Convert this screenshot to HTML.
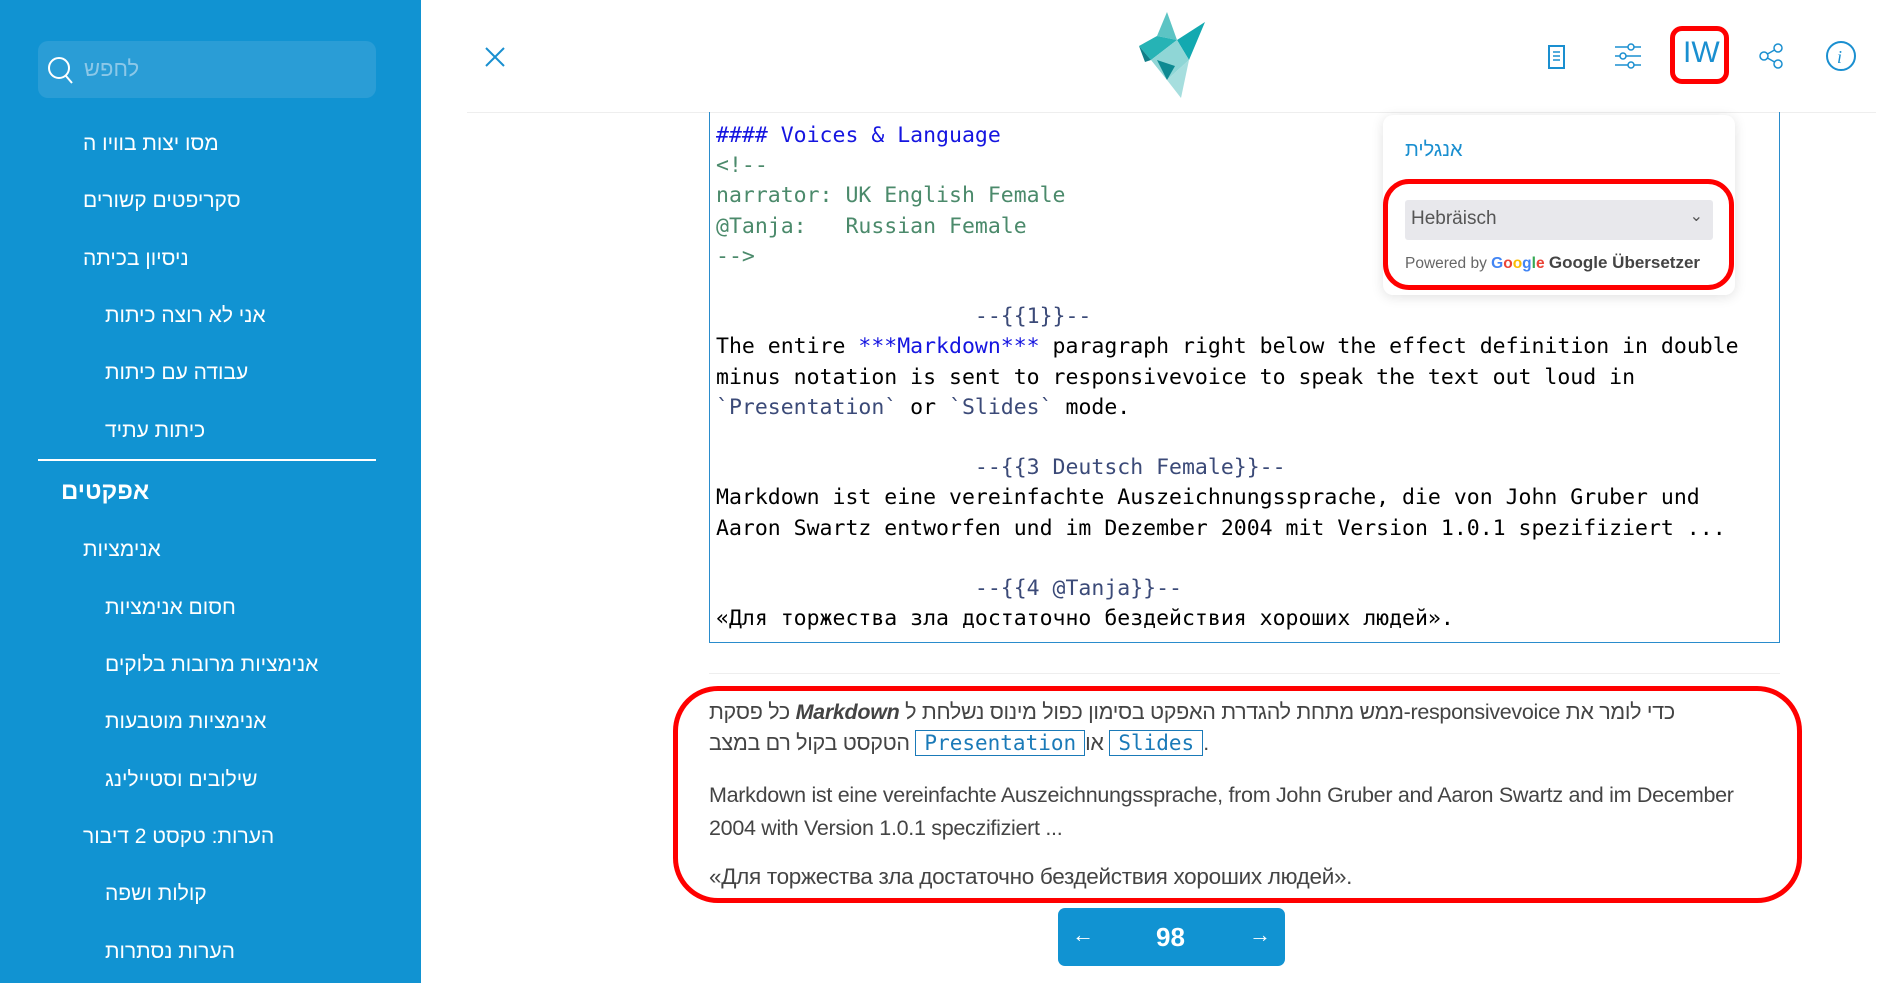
<!DOCTYPE html>
<html><head><meta charset="utf-8"><style>
*{margin:0;padding:0;box-sizing:border-box}
body{width:1903px;height:983px;position:relative;overflow:hidden;background:#fff;font-family:"Liberation Sans","Noto Sans CJK SC",sans-serif}
.sb{position:absolute;left:0;top:0;width:421px;height:983px;background:#1193d2;color:#fff}
.search{position:absolute;left:38px;top:41px;width:338px;height:57px;background:#2a9dd6;border-radius:10px}
.search span{position:absolute;left:46px;top:15px;font-size:22px;color:#8cc8e8}
.it{position:absolute;font-size:21px;white-space:nowrap;transform:translateY(-50%)}
.l1{left:83px}.l2{left:105px}
.hr{position:absolute;left:38px;width:338px;top:459px;border-top:2px solid #fff}
.abs{position:absolute}
.code{position:absolute;left:709px;top:112px;width:1071px;height:531px;border:1px solid #2a8ccc;border-top:none;overflow:hidden;font-family:"DejaVu Sans Mono","Liberation Mono",monospace;font-size:21.5px;line-height:30.2px;padding:9px 0 0 6px;white-space:pre}
.b{color:#1515e0}.g{color:#4b8a6b}.c{color:#3b4a78}
.pop{position:absolute;left:1383px;top:115px;width:352px;height:180px;background:#fff;border-radius:10px;box-shadow:0 2px 12px rgba(0,0,0,.12)}
.red{position:absolute;border:5px solid #f00}
.tx{position:absolute;left:709px;font-size:21.5px;color:#444;white-space:nowrap;font-family:"Liberation Sans",sans-serif;letter-spacing:-0.3px;direction:ltr}
.cd{font-family:"DejaVu Sans Mono","Liberation Mono",monospace;color:#1a7ab8;border:1px solid #1a7ab8;padding:0 8px;font-size:21px;letter-spacing:0}
</style></head><body>
<div class="sb">
 <div class="search"><svg class="abs" style="left:8px;top:14px" width="30" height="32" viewBox="0 0 30 32"><circle cx="13" cy="13" r="10" fill="none" stroke="#fff" stroke-width="2"/><path d="M20 21l6 7" stroke="#fff" stroke-width="2"/></svg><span>לחפש</span></div>
 <div class="it l1" style="top:144px">מסו יצות בוויו ה</div>
 <div class="it l1" style="top:201px">סקריפטים קשורים</div>
 <div class="it l1" style="top:259px">ניסיון בכיתה</div>
 <div class="it l2" style="top:316px">אני לא רוצה כיתות</div>
 <div class="it l2" style="top:373px">עבודה עם כיתות</div>
 <div class="it l2" style="top:431px">כיתות עתיד</div>
 <div class="hr"></div>
 <div class="it" style="left:61px;top:492px;font-weight:bold;font-size:24px">אפקטים</div>
 <div class="it l1" style="top:550px">אנימציות</div>
 <div class="it l2" style="top:608px">חסום אנימציות</div>
 <div class="it l2" style="top:665px">אנימציות מרובות בלוקים</div>
 <div class="it l2" style="top:722px">אנימציות מוטבעות</div>
 <div class="it l2" style="top:780px">שילובים וסטיילינג</div>
 <div class="it l1" style="top:837px">הערות: טקסט 2 דיבור</div>
 <div class="it l2" style="top:894px">קולות ושפה</div>
 <div class="it l2" style="top:952px">הערות נסתרות</div>
</div>
<svg class="abs" style="left:484px;top:46px" width="22" height="22"><path d="M2 2L20 20M20 2L2 20" stroke="#1a8fd0" stroke-width="2"/></svg>
<svg class="abs" style="left:1137px;top:10px" width="70" height="88" viewBox="0 0 70 88"><polygon points="30,2 40,30 20,26" fill="#5cc4c4"/><polygon points="40,30 68,12 52,50" fill="#13a9b0"/><polygon points="2,36 20,26 40,30 14,50" fill="#26b3b5"/><polygon points="14,50 40,30 52,50 30,70" fill="#8fd6d6"/><polygon points="2,36 14,50 8,52" fill="#107f88"/><polygon points="30,70 52,50 44,88" fill="#a6dede"/><polygon points="20,50 38,56 30,70" fill="#0e8a92"/></svg>
<div class="abs" style="left:467px;top:112px;width:1409px;border-top:1px solid #eee"></div>
<svg class="abs" style="left:1547px;top:44px" width="20" height="26"><rect x="2" y="2" width="15" height="22" fill="none" stroke="#1a8fd0" stroke-width="2"/><path d="M6 8h7M6 12h7M6 16h7" stroke="#1a8fd0" stroke-width="1.5"/></svg>
<svg class="abs" style="left:1613px;top:42px" width="30" height="28"><path d="M2 5h26M2 14h26M2 23h26" stroke="#1a8fd0" stroke-width="1.5"/><circle cx="18" cy="5" r="3" fill="#fff" stroke="#1a8fd0" stroke-width="1.5"/><circle cx="10" cy="14" r="3" fill="#fff" stroke="#1a8fd0" stroke-width="1.5"/><circle cx="18" cy="23" r="3" fill="#fff" stroke="#1a8fd0" stroke-width="1.5"/></svg>
<div class="abs" style="left:1683px;top:36px;font-size:30px;color:#1a8fd0">IW</div>
<div class="red" style="left:1670px;top:26px;width:59px;height:58px;border-radius:12px"></div>
<svg class="abs" style="left:1757px;top:42px" width="28" height="28"><path d="M7 14L21 6M7 14L21 22" stroke="#1a8fd0" stroke-width="1.5"/><circle cx="7" cy="14" r="4" fill="#fff" stroke="#1a8fd0" stroke-width="1.5"/><circle cx="21" cy="6" r="4" fill="#fff" stroke="#1a8fd0" stroke-width="1.5"/><circle cx="21" cy="22" r="4" fill="#fff" stroke="#1a8fd0" stroke-width="1.5"/></svg>
<svg class="abs" style="left:1825px;top:40px" width="32" height="32"><circle cx="16" cy="16" r="14" fill="none" stroke="#1a8fd0" stroke-width="2"/><text x="12" y="23" font-family="Liberation Serif" font-style="italic" font-size="18" fill="#1a8fd0">i</text></svg>
<div class="code"><span class="b">#### Voices &amp; Language</span>
<span class="g">&lt;!--
narrator: UK English Female
@Tanja:   Russian Female
--&gt;</span>

<span class="c">                    --{{1}}--</span>
The entire <span class="b">***Markdown***</span> paragraph right below the effect definition in double
minus notation is sent to responsivevoice to speak the text out loud in
<span class="c">`Presentation`</span> or <span class="c">`Slides`</span> mode.

<span class="c">                    --{{3 Deutsch Female}}--</span>
Markdown ist eine vereinfachte Auszeichnungssprache, die von John Gruber und
Aaron Swartz entworfen und im Dezember 2004 mit Version 1.0.1 spezifiziert ...

<span class="c">                    --{{4 @Tanja}}--</span>
«Для торжества зла достаточно бездействия хороших людей».</div>
<div class="pop">
 <div class="abs" style="left:22px;top:24px;font-size:20px;color:#1a8fd0">אנגלית</div>
 <div class="abs" style="left:22px;top:85px;width:308px;height:40px;background:#e8e8ec;border-radius:3px;font-size:19px;color:#555;padding:8px 6px">Hebräisch<span style="position:absolute;right:10px;top:6px;font-size:16px">⌄</span></div>
 <div class="abs" style="left:22px;top:138px;font-size:15.5px;color:#666;white-space:nowrap">Powered by <b style="color:#4285f4">G</b><b style="color:#ea4335">o</b><b style="color:#fbbc05">o</b><b style="color:#4285f4">g</b><b style="color:#34a853">l</b><b style="color:#ea4335">e</b> <b style="color:#444;font-size:17px">Google Übersetzer</b></div>
</div>
<div class="red" style="left:1383px;top:179px;width:351px;height:111px;border-radius:26px"></div>
<div class="abs" style="left:709px;top:673px;width:1071px;border-top:1px solid #eee"></div>
<div class="red" style="left:673px;top:686px;width:1129px;height:217px;border-radius:45px"></div>
<div class="tx" style="top:700px"><bdi>כל פסקת</bdi> <b><i>Markdown</i></b> <bdi>ממש מתחת להגדרת האפקט בסימון כפול מינוס נשלחת ל</bdi>-responsivevoice <bdi>כדי לומר את</bdi></div>
<div class="tx" style="top:731px"><bdi>הטקסט בקול רם במצב</bdi> <span class="cd">Presentation</span><bdi>או</bdi> <span class="cd">Slides</span>.</div>
<div class="tx" style="top:783px">Markdown ist eine vereinfachte Auszeichnungssprache, from John Gruber and Aaron Swartz and im December</div>
<div class="tx" style="top:816px">2004 with Version 1.0.1 speczifiziert ...</div>
<div class="tx" style="top:864px;font-size:22.5px">«Для торжества зла достаточно бездействия хороших людей».</div>
<div class="abs" style="left:1058px;top:908px;width:227px;height:58px;background:#1193d2;border-radius:7px;color:#fff">
 <span class="abs" style="left:14px;top:14px;font-size:22px">←</span>
 <span class="abs" style="left:98px;top:14px;font-size:26px;font-weight:bold">98</span>
 <span class="abs" style="right:14px;top:14px;font-size:22px">→</span>
</div>
</body></html>
